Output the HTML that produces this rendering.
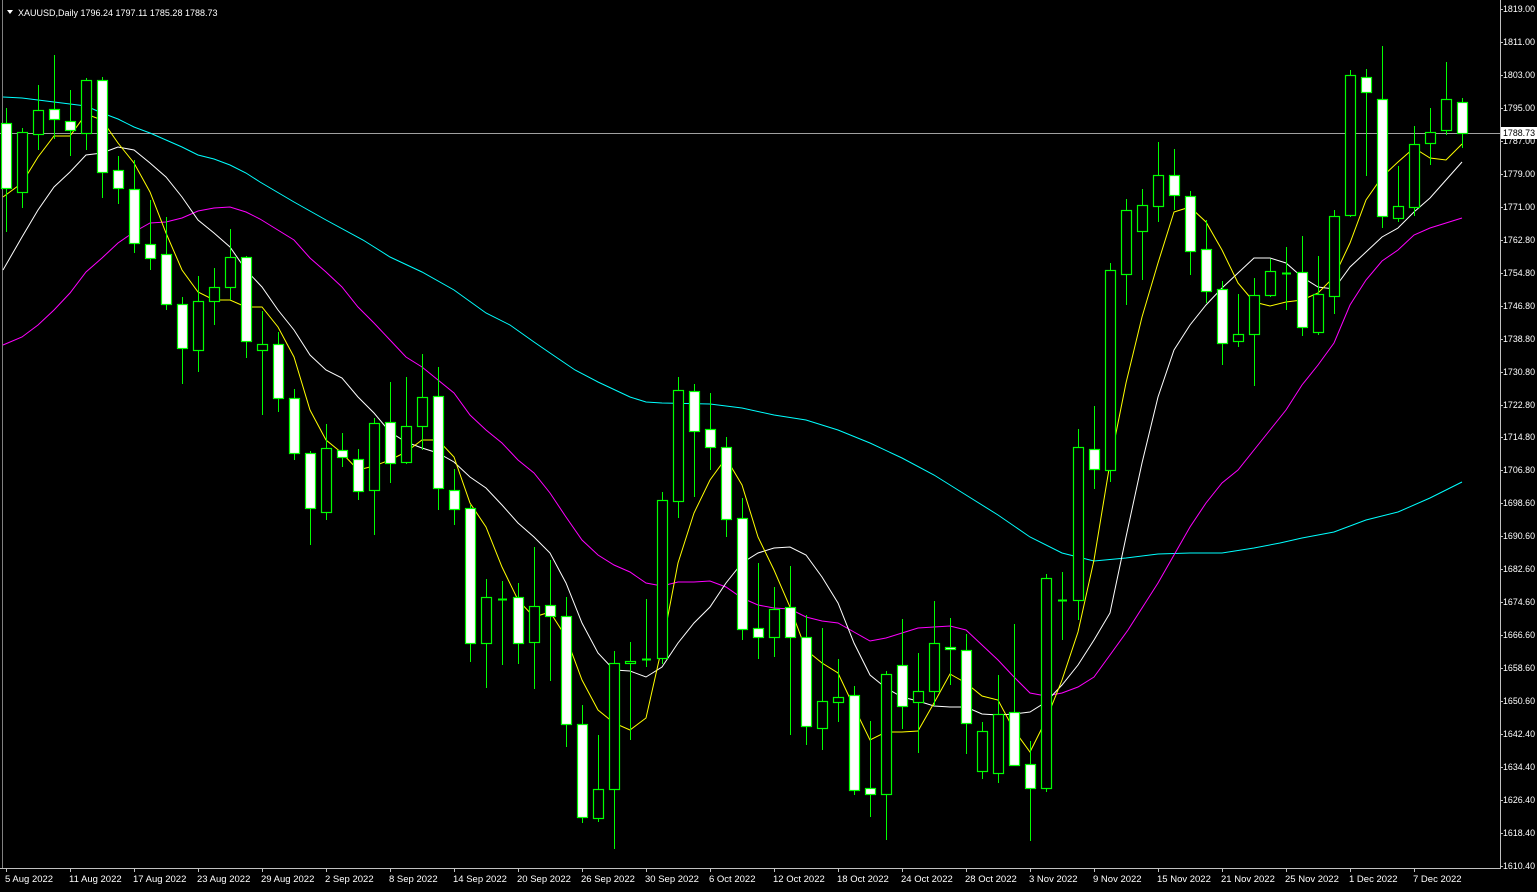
<!DOCTYPE html>
<html><head><meta charset="utf-8"><style>
html,body{margin:0;padding:0;background:#000;width:1537px;height:892px;overflow:hidden}
svg{display:block}
text{font-family:"Liberation Sans",sans-serif;font-size:9px;fill:#fff}
</style></head><body>
<svg id="c" width="1537" height="892" xmlns="http://www.w3.org/2000/svg"></svg>
<script>
var s=document.getElementById('c'),h='';
h+='<rect x="0" y="0" width="1537" height="892" fill="#000"/>';
h+='<line x1="2.5" y1="0" x2="2.5" y2="868" stroke="#808080"/>';
h+='<line x1="0" y1="133.5" x2="1500" y2="133.5" stroke="#a0a0a0"/>';
function pl(pts,col){var d=pts.map(function(p,i){return (i?'L':'M')+p[0]+' '+p[1]}).join(' ');h+='<path d="'+d+'" fill="none" stroke="'+col+'" stroke-width="1"/>';}
pl([[3,97],[22,98],[38,100],[54,102],[70,104],[86,106],[102,113],[118,119],[134,127],[150,133],[166,140],[182,147],[198,155],[214,159],[230,165],[246,173],[260,182],[294,202],[326,220],[363,240],[390,257],[422,272],[454,290],[486,313],[510,325],[534,342],[550,353],[575,370],[598,382],[630,397],[646,402],[662,403],[710,404],[742,408],[774,415],[806,420],[838,430],[870,443],[902,458],[934,475],[966,495],[998,515],[1030,537],[1062,553],[1094,561],[1126,558],[1158,554],[1190,553],[1222,553],[1254,548],[1280,543],[1302,538],[1334,532],[1366,520],[1398,512],[1430,498],[1462,482]],'#00ffff');
pl([[3,345],[22,337],[38,325],[54,310],[70,293],[86,272],[102,258],[118,243],[134,232],[150,223],[166,222],[182,218],[198,211],[214,208],[230,207],[246,212],[260,219],[294,240],[310,258],[326,272],[342,287],[358,307],[374,323],[390,340],[406,357],[422,367],[438,380],[454,393],[470,415],[486,430],[502,443],[518,460],[534,473],[550,493],[566,517],[582,540],[598,555],[614,565],[630,572],[646,583],[662,586],[678,582],[694,582],[710,581],[726,587],[742,598],[758,605],[774,608],[790,609],[806,617],[822,621],[838,623],[854,632],[870,641],[886,638],[902,633],[918,628],[934,627],[950,626],[966,630],[982,645],[998,660],[1014,677],[1030,693],[1046,696],[1062,693],[1078,687],[1094,677],[1110,655],[1128,630],[1158,583],[1190,527],[1206,503],[1222,483],[1238,470],[1254,450],[1270,430],[1286,410],[1302,385],[1318,365],[1334,343],[1350,305],[1366,280],[1382,261],[1398,250],[1414,235],[1430,228],[1446,223],[1462,218]],'#ff00ff');
pl([[3,270],[22,237],[38,210],[54,187],[70,172],[86,155],[102,153],[118,147],[134,150],[150,163],[166,177],[182,197],[198,220],[214,233],[230,247],[246,270],[262,287],[278,310],[294,330],[310,355],[326,370],[342,378],[358,397],[374,413],[390,432],[406,442],[422,448],[438,453],[454,462],[470,477],[486,488],[502,505],[518,523],[534,537],[550,553],[566,583],[582,623],[598,653],[614,670],[630,671],[646,677],[662,667],[678,643],[694,623],[710,607],[726,583],[742,563],[758,553],[774,548],[790,547],[806,555],[822,577],[838,603],[854,643],[870,675],[886,688],[902,697],[918,701],[934,706],[950,707],[966,707],[982,714],[998,715],[1014,714],[1030,712],[1046,702],[1062,685],[1078,665],[1094,640],[1110,613],[1126,537],[1142,463],[1158,397],[1174,350],[1190,325],[1206,305],[1222,288],[1238,273],[1254,258],[1270,258],[1286,263],[1302,277],[1318,287],[1334,289],[1350,267],[1366,252],[1382,237],[1398,228],[1414,212],[1430,198],[1446,180],[1462,162]],'#ffffff');
pl([[3,197],[22,183],[38,157],[54,136],[70,136],[86,114],[102,120],[118,143],[134,163],[150,192],[166,233],[182,270],[198,292],[214,300],[230,300],[246,307],[262,307],[278,327],[294,357],[310,410],[326,440],[342,453],[358,470],[374,466],[390,460],[406,452],[422,440],[438,440],[454,457],[470,503],[486,527],[502,567],[518,600],[534,617],[550,612],[566,637],[582,680],[598,710],[614,723],[630,730],[646,718],[662,647],[678,563],[694,513],[710,480],[726,458],[742,485],[758,537],[774,570],[790,607],[806,650],[822,663],[838,673],[854,707],[870,740],[886,732],[902,732],[918,731],[934,703],[950,674],[966,683],[982,696],[998,700],[1014,730],[1030,752],[1046,720],[1062,680],[1078,632],[1094,560],[1110,463],[1126,383],[1142,317],[1158,263],[1174,212],[1190,207],[1206,222],[1222,250],[1238,283],[1254,302],[1270,306],[1286,302],[1302,300],[1318,293],[1334,277],[1350,243],[1366,200],[1382,177],[1398,162],[1414,148],[1430,158],[1446,160],[1462,144]],'#ffff00');
var C=[[123,188,108,232,0],[132,192,128,208,1],[110,134,85,150,1],[109,119,55,139,0],[121,130,90,156,0],[80,133,78,150,1],[80,172,77,198,0],[170,188,156,204,0],[189,243,160,253,0],[244,258,200,270,0],[254,304,217,310,0],[304,348,297,384,0],[301,350,276,372,1],[287,301,268,325,1],[257,287,229,300,1],[257,341,256,358,0],
[344,350,311,415,1],[344,398,332,412,0],[398,453,389,460,0],[453,508,451,545,0],[448,512,424,520,1],[450,457,433,467,0],[459,491,449,500,0],[423,490,418,535,1],[422,463,382,483,0],[426,462,377,464,1],[397,426,354,450,1],[396,488,367,510,0],[490,509,469,525,0],[508,643,505,662,0],[597,643,579,688,1],[599,600,581,665,1],
[597,643,583,664,0],[606,642,547,689,1],[605,616,560,681,0],[616,724,597,747,0],[724,817,705,823,0],[789,818,735,822,1],[663,789,651,849,1],[661,663,642,740,1],[659,659,599,667,1],[500,658,492,664,1],[390,501,377,518,1],[391,431,384,497,0],[429,447,393,470,0],[447,519,437,537,0],[518,629,498,640,0],
[628,637,563,659,0],[609,637,587,657,1],[607,637,566,735,0],[637,726,615,745,0],[701,728,628,750,1],[697,702,659,722,1],[695,790,686,795,0],[788,794,721,817,0],[674,794,671,840,1],[665,706,619,729,0],[691,702,653,753,1],[643,691,601,706,1],[647,649,618,685,0],[650,723,634,754,0],[731,771,722,779,1],[714,773,675,783,1],[712,765,624,766,0],[764,788,741,841,0],[578,788,574,792,1],
[600,600,572,640,1],[447,600,429,620,1],[449,469,406,489,0],[270,470,263,482,1],[210,274,199,305,1],[205,231,189,280,1],[175,206,142,222,1],[175,195,149,210,0],[196,251,191,275,0],[249,291,220,303,0],[289,343,281,365,0],[334,341,294,347,1],[295,334,278,386,1],[271,295,259,297,1],
[273,273,247,310,1],[272,327,236,336,0],[294,332,256,335,1],[216,296,210,314,1],[75,215,70,217,1],[77,92,69,176,0],[99,216,46,228,0],[206,218,166,222,1],[144,207,126,216,1],[132,143,108,165,1],[99,130,62,135,1],[102,133,98,148,0]];
for(var i=0;i<C.length;i++){var c=C[i],x=6+16*i,wx=x+0.5;
h+='<line x1="'+wx+'" y1="'+c[2]+'" x2="'+wx+'" y2="'+c[3]+'" stroke="#00ff00"/>';
if(c[1]-c[0]<2){h+='<line x1="'+(x-4)+'" y1="'+(c[0]+0.5)+'" x2="'+(x+5)+'" y2="'+(c[0]+0.5)+'" stroke="#00ff00" stroke-width="2"/>';}
else h+='<rect x="'+(x-4.5)+'" y="'+(c[0]+0.5)+'" width="10" height="'+(c[1]-c[0])+'" fill="'+(c[4]?'#000':'#fff')+'" stroke="#00ff00" stroke-width="1.2"/>';}
h+='<rect x="1500" y="0" width="37" height="892" fill="#000"/>';
h+='<line x1="1500.5" y1="0" x2="1500.5" y2="868" stroke="#c0c0c0"/>';
h+='<line x1="0" y1="868.5" x2="1501" y2="868.5" stroke="#c0c0c0"/>';
var L=['1819.00','1811.00','1803.00','1795.00','1787.00','1779.00','1771.00','1762.80','1754.80','1746.80','1738.80','1730.80','1722.80','1714.80','1706.80','1698.60','1690.60','1682.60','1674.60','1666.60','1658.60','1650.60','1642.40','1634.40','1626.40','1618.40','1610.40'];
for(var k=0;k<L.length;k++){var y=Math.round(9+k*32.96);
h+='<line x1="1500" y1="'+(y+0.5)+'" x2="1503" y2="'+(y+0.5)+'" stroke="#c0c0c0"/>';
h+='<text x="1503" y="'+(y+3)+'" textLength="32" lengthAdjust="spacingAndGlyphs">'+L[k]+'</text>';}
h+='<rect x="1501" y="127" width="36" height="12" fill="#fff"/><text x="1503" y="136" style="fill:#000" textLength="32" lengthAdjust="spacingAndGlyphs">1788.73</text>';
var D=['5 Aug 2022','11 Aug 2022','17 Aug 2022','23 Aug 2022','29 Aug 2022','2 Sep 2022','8 Sep 2022','14 Sep 2022','20 Sep 2022','26 Sep 2022','30 Sep 2022','6 Oct 2022','12 Oct 2022','18 Oct 2022','24 Oct 2022','28 Oct 2022','3 Nov 2022','9 Nov 2022','15 Nov 2022','21 Nov 2022','25 Nov 2022','1 Dec 2022','7 Dec 2022'];
for(var k=0;k<D.length;k++){var x=6+64*k;
h+='<line x1="'+(x+0.5)+'" y1="868" x2="'+(x+0.5)+'" y2="872" stroke="#c0c0c0"/>';
h+='<text x="'+(x-1)+'" y="882" style="font-size:9.5px">'+D[k]+'</text>';}
h+='<path d="M7 10 L13 10 L10 14 Z" fill="#fff"/><text x="18" y="16">XAUUSD,Daily  1796.24 1797.11 1785.28 1788.73</text>';
s.innerHTML=h;
</script>
</body></html>
